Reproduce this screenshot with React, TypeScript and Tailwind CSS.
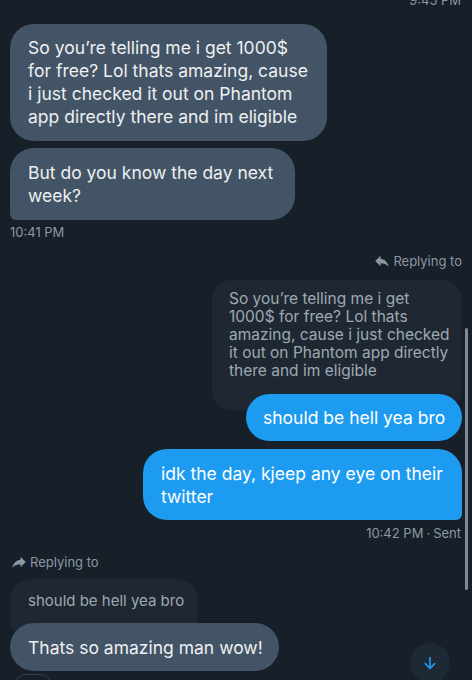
import React from "react";

const ReplyIcon = ({ flip = false }: { flip?: boolean }) => (
  <svg
    width="18"
    height="18"
    viewBox="0 0 24 24"
    fill="#8b98a5"
    style={flip ? { transform: "scaleX(-1)" } : undefined}
  >
    <path d="M10 9V5l-7 7 7 7v-4.1c5 0 8.5 1.6 11 5.1-1-5-4-10-11-11z" />
  </svg>
);

export default function App() {
  return (
    <div
      className="relative h-[680px] w-[472px] overflow-hidden bg-[#171f29] px-[10px]"
      style={{ fontFamily: "Inter, 'Noto Sans', sans-serif" }}
    >
      <div className="flex flex-col">
        <div className="-mt-[8px] flex justify-end pr-[1px] text-[13px] leading-[16px] text-[#8b98a5]">
          9:45 PM
        </div>

        {/* received group */}
        <div className="mt-[16px] w-[317px] whitespace-nowrap rounded-[24px] bg-[#435466] pb-[13px] pl-[18px] pr-[10px] pt-[12px] text-[17.5px] leading-[23px] text-[#eef0f2]">
          So you’re telling me i get 1000$
          <br />
          for free? Lol thats amazing, cause
          <br />
          i just checked it out on Phantom
          <br />
          app directly there and im eligible
        </div>
        <div className="mt-[7px] w-[285px] whitespace-nowrap rounded-[24px] rounded-bl-[6px] bg-[#435466] pb-[13px] pl-[18px] pr-[10px] pt-[13px] text-[17.5px] leading-[23px] text-[#eef0f2]">
          But do you know the day next
          <br />
          week?
        </div>
        <div className="mt-[4px] text-[13px] leading-[16px] text-[#8b98a5]">10:41 PM</div>

        {/* sent group */}
        <div className="mt-[12px] flex items-center justify-end gap-[2px] text-[13px] leading-[18px] text-[#8b98a5]">
          <ReplyIcon />
          <span>Replying to</span>
        </div>
        <div className="mt-[10px] w-[250px] self-end whitespace-nowrap rounded-[20px] bg-[#1f2832] pb-[30px] pl-[17px] pr-[6px] pt-[10px] text-[15.5px] leading-[18px] text-[#9ea8b2]">
          So you’re telling me i get
          <br />
          1000$ for free? Lol thats
          <br />
          amazing, cause i just checked
          <br />
          it out on Phantom app directly
          <br />
          there and im eligible
        </div>
        <div className="-mt-[16px] w-[216px] self-end whitespace-nowrap rounded-[24px] bg-[#1d9bf0] pl-[17px] py-[12px] text-[17.5px] leading-[23px] text-white">
          should be hell yea bro
        </div>
        <div className="mt-[8px] w-[319px] self-end whitespace-nowrap rounded-[24px] rounded-br-[6px] bg-[#1d9bf0] pb-[12px] pl-[18px] pt-[13px] text-[17.5px] leading-[23px] text-white">
          idk the day, kjeep any eye on their
          <br />
          twitter
        </div>
        <div className="mt-[5px] flex justify-end gap-[3px] pr-[1px] text-[13px] leading-[16px] text-[#8b98a5]">
          <span>10:42 PM</span>
          <span>·</span>
          <span>Sent</span>
        </div>

        {/* received reply */}
        <div className="mt-[12px] flex items-center gap-[2px] text-[13px] leading-[18px] text-[#8b98a5]">
          <ReplyIcon flip />
          <span>Replying to</span>
        </div>
        <div className="mt-[8px] w-[188px] whitespace-nowrap rounded-[20px] bg-[#1f2832] pb-[29px] pl-[18px] pt-[13px] text-[15px] leading-[18px] text-[#9ea8b2]">
          should be hell yea bro
        </div>
        <div className="-mt-[16px] w-[269px] whitespace-nowrap rounded-[24px] bg-[#435466] pl-[18px] py-[12.5px] text-[17.5px] leading-[23px] text-[#eef0f2]">
          Thats so amazing man wow!
        </div>
        <div className="ml-[3px] mt-[3px] h-[26px] w-[40px] rounded-full border border-[#36414c]" />
      </div>

      {/* scrollbar */}
      <div className="absolute right-[4px] top-[328px] h-[262px] w-[3px] rounded-full bg-[#7f8a94]" />

      {/* scroll to bottom button */}
      <div className="absolute left-[410px] top-[643px] flex h-[40px] w-[40px] items-center justify-center rounded-full bg-[#1e2936]">
        <svg width="16" height="16" viewBox="0 0 24 24" fill="none" stroke="#1d9bf0" strokeWidth="2.5" strokeLinecap="round" strokeLinejoin="round">
          <path d="M12 4v16" />
          <path d="M5 13l7 7 7-7" />
        </svg>
      </div>
    </div>
  );
}
